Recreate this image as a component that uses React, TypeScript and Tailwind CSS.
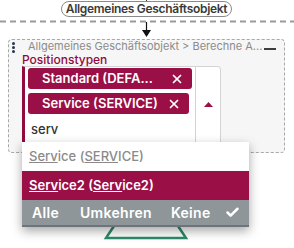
import { X, Check } from "lucide-react";

const font = { fontFamily: "Inter, 'Noto Sans', sans-serif" };

function Chip({ label, width }: { label: string; width: string }) {
  return (
    <div
      className={`flex h-[21px] items-center justify-between rounded-[3px] bg-[#990f46] pl-[14px] pr-[8px] text-[13px] font-semibold text-white ${width}`}
    >
      <span className="truncate">{label}</span>
      <X size={14} strokeWidth={3} />
    </div>
  );
}

export default function App() {
  return (
    <div className="relative h-[248px] w-[294px] overflow-hidden bg-white" style={font}>
      {/* connector lines */}
      <svg className="absolute left-0 top-0" width="294" height="40">
        <line x1="146.5" y1="0" x2="146.5" y2="3" stroke="#333" strokeWidth="1" strokeDasharray="3 2" />
        <line x1="0" y1="21.5" x2="294" y2="21.5" stroke="#9a9a9a" strokeWidth="2" strokeDasharray="6 4" />
        <line x1="146.5" y1="22" x2="146.5" y2="31" stroke="#111" strokeWidth="1.2" />
        <polygon points="142,30 151,30 146.5,37" fill="#111" />
      </svg>

      {/* group pill */}
      <div className="absolute left-[61px] top-[1px] flex h-[16px] w-[171px] items-center justify-center whitespace-nowrap rounded-full border border-[#8a8a8a] bg-white text-[12px] font-semibold tracking-[-0.3px] text-[#3a3a3a]">
        Allgemeines Geschäftsobjekt
      </div>

      {/* node panel */}
      <div className="absolute left-[8px] top-[39px] h-[114px] w-[277px] rounded-[4px] border border-dashed border-[#a8a8a8] bg-[#f6f6f6] pl-[3px] pr-[8px]">
        <div className="flex h-[12px] items-center">
          <div className="flex h-[12px] w-[6px] flex-col gap-[1px] pt-[2px]">
            <span className="h-[3px] w-[3px] shrink-0 rounded-full bg-[#2c3550]" />
            <span className="h-[3px] w-[3px] shrink-0 rounded-full bg-[#2c3550]" />
            <span className="h-[3px] w-[3px] shrink-0 rounded-full bg-[#2c3550]" />
          </div>
          <span className="ml-[10px] whitespace-nowrap text-[11px] leading-[12px] text-[#8c8c8c]">
            Allgemeines Geschäftsobjekt &gt; Berechne A...
          </span>
          <span className="ml-auto mt-[6px] h-[2px] w-[12px] shrink-0 bg-[#3d3d3d]" />
        </div>
        <div className="ml-[10px] mt-[1px] text-[12px] font-medium leading-[13px] text-[#8f0b40]">Positionstypen</div>

        {/* select */}
        <div className="ml-[10px] flex h-[90px] w-[199px] rounded-tr-[4px] border border-l-[3px] border-[#d4d4d4] border-l-[#8f0b40] bg-white">
          <div className="flex flex-1 flex-col gap-[4px] pl-[3px] pt-[1px]">
            <Chip label="Standard (DEFA..." width="w-[164px]" />
            <Chip label="Service (SERVICE)" width="w-[161px]" />
            <div className="pl-[3px] pt-[2px] text-[13px] font-medium text-[#333]">serv</div>
          </div>
          <div className="flex w-[25px] justify-center border-l border-[#d4d4d4] pt-[35px]">
            <svg width="9" height="5" viewBox="0 0 9 5">
              <polygon points="0,5 9,5 4.5,0" fill="#990f46" />
            </svg>
          </div>
        </div>
      </div>

      {/* green shape below */}
      <svg className="absolute left-0 top-[220px]" width="294" height="28">
        <polyline points="114,6 106,18 186,18 178,6" fill="none" stroke="#2b8a6a" strokeWidth="2.5" />
      </svg>

      {/* dropdown */}
      <div className="absolute left-[22px] top-[142px] w-[227px] bg-white shadow-[0_4px_10px_rgba(0,0,0,0.35)]">
        <div className="flex h-[29px] items-center pl-[7px] text-[13px] font-medium text-[#8a8a8a]">
          <span className="underline">Serv</span>ice (<span className="underline">SERV</span>ICE)
        </div>
        <div className="flex h-[29px] items-center bg-[#990f46] pl-[7px] text-[13px] font-semibold text-white">
          <span className="underline">Serv</span>ice2 (<span className="underline">Serv</span>ice2)
        </div>
        <div className="flex h-[27px] items-center border-b-2 border-[#6e7579] bg-[#8e969a] pl-[10px] pr-[9px] text-[14px] font-semibold tracking-[0.3px] text-white">
          <span>Alle</span>
          <span className="ml-[21px]">Umkehren</span>
          <span className="ml-[19px]">Keine</span>
          <Check className="ml-auto" size={15} strokeWidth={4} />
        </div>
      </div>
    </div>
  );
}
